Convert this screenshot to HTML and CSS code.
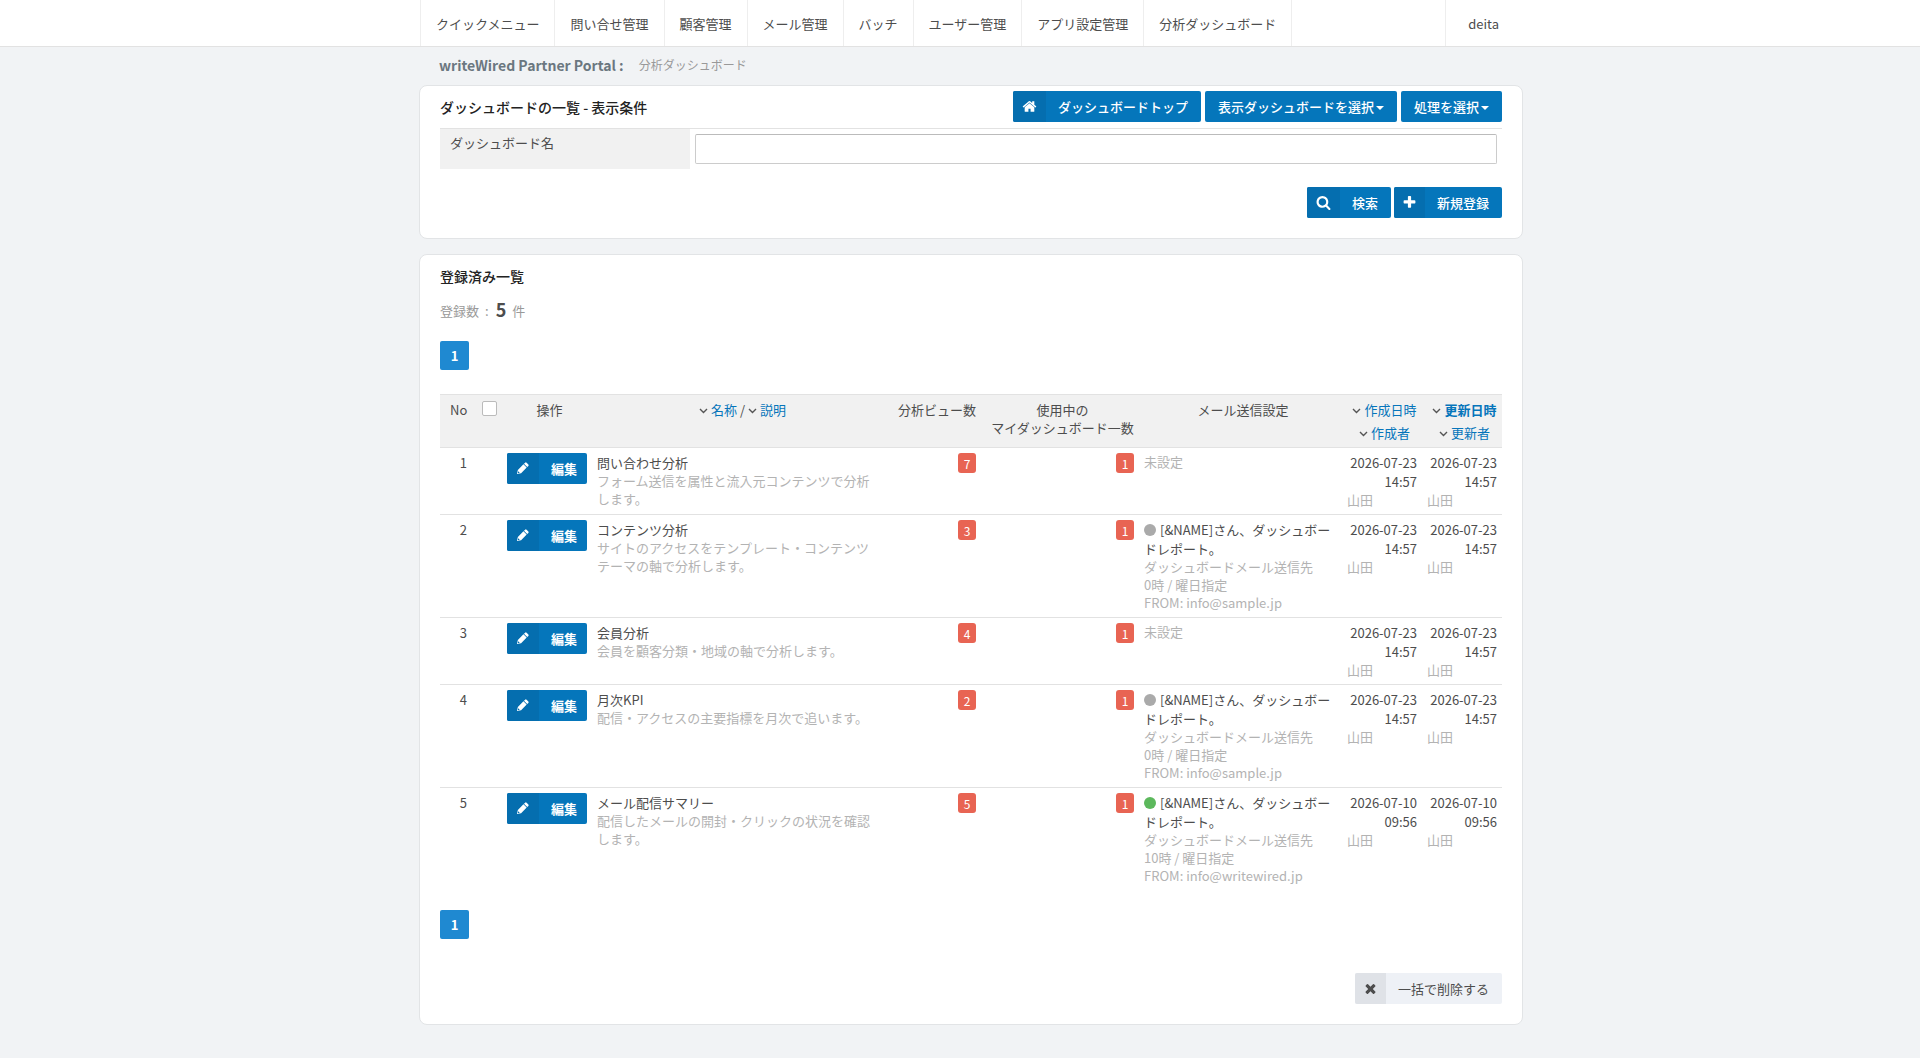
FILE: index.html
```html
<!DOCTYPE html>
<html lang="ja">
<head>
  <meta charset="UTF-8">
  <title>分析ダッシュボード</title>
  <link rel="stylesheet" href="styles.css">
</head>
<body>

<!-- icons -->
<svg class="sprite" aria-hidden="true">
  <symbol id="home" viewBox="0 0 1792 1792"><path d="M1472 992v480q0 26-19 45t-45 19h-384v-384h-256v384h-384q-26 0-45-19t-19-45v-480q0-1 .5-3t.5-3l575-474 575 474q1 2 1 6zm223-69l-62 74q-8 9-21 11h-3q-13 0-21-7l-692-577-692 577q-12 8-24 7-13-2-21-11l-62-74q-8-10-7-23.500t11-21.500l719-599q32-26 76-26t76 26l244 204v-195q0-14 9-23t23-9h192q14 0 23 9t9 23v408l219 182q10 8 11 21.500t-7 23.500z"/></symbol>
  <symbol id="search" viewBox="0 0 1792 1792"><path d="M1216 832q0-185-131.500-316.500t-316.500-131.500-316.500 131.500-131.500 316.500 131.500 316.500 316.500 131.500 316.500-131.500 131.500-316.500zm512 832q0 52-38 90t-90 38q-54 0-90-38l-343-342q-179 124-399 124-143 0-273.500-55.500t-225-150-150-225-55.500-273.500 55.500-273.500 150-225 225-150 273.500-55.500 273.500 55.500 225 150 150 225 55.500 273.500q0 220-124 399l343 343q37 37 37 90z"/></symbol>
  <symbol id="plus" viewBox="0 0 1792 1792"><path d="M1600 736v192q0 40-28 68t-68 28h-416v416q0 40-28 68t-68 28h-192q-40 0-68-28t-28-68v-416h-416q-40 0-68-28t-28-68v-192q0-40 28-68t68-28h416v-416q0-40 28-68t68-28h192q40 0 68 28t28 68v416h416q40 0 68 28t28 68z"/></symbol>
  <symbol id="pencil" viewBox="0 0 14 14"><path d="M1 13l1-4.500 6-6 3.500 3.500-6 6zM8.600 1.900l1.200-1.200q.8-.7 1.600 0l1.900 1.900q.7.8 0 1.600l-1.200 1.200z"/><path class="notch" d="M2.300 10l1.700 1.700-1.300.4-.8-.8z"/></symbol>
  <symbol id="times" viewBox="0 0 1792 1792"><path d="M1490 1322q0 40-28 68l-136 136q-28 28-68 28t-68-28l-294-294-294 294q-28 28-68 28t-68-28l-136-136q-28-28-28-68t28-68l294-294-294-294q-28-28-28-68t28-68l136-136q28-28 68-28t68 28l294 294 294-294q28-28 68-28t68 28l136 136q28 28 28 68t-28 68l-294 294 294 294q28 28 28 68z"/></symbol>
  <symbol id="angle" viewBox="0 0 9 6"><path d="M1 1l3.500 3.500L8 1" fill="none" stroke="#555" stroke-width="1.400"/></symbol>
</svg>

<header class="navbar">
  <nav class="container nav">
    <a href="#">クイックメニュー</a>
    <a href="#">問い合せ管理</a>
    <a href="#">顧客管理</a>
    <a href="#">メール管理</a>
    <a href="#">バッチ</a>
    <a href="#">ユーザー管理</a>
    <a href="#">アプリ設定管理</a>
    <a href="#">分析ダッシュボード</a>
    <a href="#" class="user">deita</a>
  </nav>
</header>

<main>
  <div class="container">
    <div class="crumb">
      <strong>writeWired Partner Portal :</strong>
      <span>分析ダッシュボード</span>
    </div>

    <section class="panel">
      <div class="panel-head">
        <h2>ダッシュボードの一覧 - 表示条件</h2>
        <div class="buttons">
          <button type="button" class="btn"><span class="ico"><svg><use href="#home"/></svg></span><span class="label">ダッシュボードトップ</span></button>
          <button type="button" class="btn drop">表示ダッシュボードを選択<i class="caret"></i></button>
          <button type="button" class="btn drop">処理を選択<i class="caret"></i></button>
        </div>
      </div>
      <div class="field">
        <label for="name">ダッシュボード名</label>
        <div class="field-input"><input type="text" id="name"></div>
      </div>
      <div class="buttons form-buttons">
        <button type="button" class="btn"><span class="ico"><svg><use href="#search"/></svg></span><span class="label">検索</span></button>
        <button type="button" class="btn"><span class="ico narrow"><svg><use href="#plus"/></svg></span><span class="label">新規登録</span></button>
      </div>
    </section>

    <section class="panel">
      <h2 class="list-title">登録済み一覧</h2>
      <p class="count">登録数<span>:</span><strong>5</strong>件</p>
      <div class="pager"><a href="#">1</a></div>

      <table class="list">
        <colgroup>
          <col class="c-no"><col class="c-check"><col class="c-edit"><col><col class="c-view"><col class="c-my"><col class="c-mail"><col class="c-date"><col class="c-date">
        </colgroup>
        <thead>
          <tr>
            <th class="right">No</th>
            <th class="right"><input type="checkbox" class="check" aria-label="全て選択"></th>
            <th>操作</th>
            <th><svg class="angle"><use href="#angle"/></svg><a href="#">名称</a> / <svg class="angle"><use href="#angle"/></svg><a href="#">説明</a></th>
            <th>分析ビュー数</th>
            <th>使用中の<br>マイダッシュボード一数</th>
            <th>メール送信設定</th>
            <th class="sort"><div><svg class="angle"><use href="#angle"/></svg><a href="#">作成日時</a></div><div><svg class="angle"><use href="#angle"/></svg><a href="#">作成者</a></div></th>
            <th class="sort"><div><svg class="angle"><use href="#angle"/></svg><a href="#" class="active">更新日時</a></div><div><svg class="angle"><use href="#angle"/></svg><a href="#">更新者</a></div></th>
          </tr>
        </thead>
        <tbody>
          <tr>
            <td class="right">1</td>
            <td></td>
            <td><button type="button" class="btn edit"><span class="ico"><svg><use href="#pencil"/></svg></span><span class="label">編集</span></button></td>
            <td class="name">問い合わせ分析<p>フォーム送信を属性と流入元コンテンツで分析します。</p></td>
            <td class="right"><span class="badge">7</span></td>
            <td class="right"><span class="badge">1</span></td>
            <td><p>未設定</p></td>
            <td class="date">2026-07-23 14:57<p>山田</p></td>
            <td class="date">2026-07-23 14:57<p>山田</p></td>
          </tr>
          <tr>
            <td class="right">2</td>
            <td></td>
            <td><button type="button" class="btn edit"><span class="ico"><svg><use href="#pencil"/></svg></span><span class="label">編集</span></button></td>
            <td class="name">コンテンツ分析<p>サイトのアクセスをテンプレート・コンテンツテーマの軸で分析します。</p></td>
            <td class="right"><span class="badge">3</span></td>
            <td class="right"><span class="badge">1</span></td>
            <td><i class="dot"></i>[&amp;NAME]さん、ダッシュボードレポート。<p>ダッシュボードメール送信先<br>0時 / 曜日指定<br>FROM: info@sample.jp</p></td>
            <td class="date">2026-07-23 14:57<p>山田</p></td>
            <td class="date">2026-07-23 14:57<p>山田</p></td>
          </tr>
          <tr>
            <td class="right">3</td>
            <td></td>
            <td><button type="button" class="btn edit"><span class="ico"><svg><use href="#pencil"/></svg></span><span class="label">編集</span></button></td>
            <td class="name">会員分析<p>会員を顧客分類・地域の軸で分析します。</p></td>
            <td class="right"><span class="badge">4</span></td>
            <td class="right"><span class="badge">1</span></td>
            <td><p>未設定</p></td>
            <td class="date">2026-07-23 14:57<p>山田</p></td>
            <td class="date">2026-07-23 14:57<p>山田</p></td>
          </tr>
          <tr>
            <td class="right">4</td>
            <td></td>
            <td><button type="button" class="btn edit"><span class="ico"><svg><use href="#pencil"/></svg></span><span class="label">編集</span></button></td>
            <td class="name">月次KPI<p>配信・アクセスの主要指標を月次で追います。</p></td>
            <td class="right"><span class="badge">2</span></td>
            <td class="right"><span class="badge">1</span></td>
            <td><i class="dot"></i>[&amp;NAME]さん、ダッシュボードレポート。<p>ダッシュボードメール送信先<br>0時 / 曜日指定<br>FROM: info@sample.jp</p></td>
            <td class="date">2026-07-23 14:57<p>山田</p></td>
            <td class="date">2026-07-23 14:57<p>山田</p></td>
          </tr>
          <tr>
            <td class="right">5</td>
            <td></td>
            <td><button type="button" class="btn edit"><span class="ico"><svg><use href="#pencil"/></svg></span><span class="label">編集</span></button></td>
            <td class="name">メール配信サマリー<p>配信したメールの開封・クリックの状況を確認します。</p></td>
            <td class="right"><span class="badge">5</span></td>
            <td class="right"><span class="badge">1</span></td>
            <td><i class="dot on"></i>[&amp;NAME]さん、ダッシュボードレポート。<p>ダッシュボードメール送信先<br>10時 / 曜日指定<br>FROM: info@writewired.jp</p></td>
            <td class="date">2026-07-10 09:56<p>山田</p></td>
            <td class="date">2026-07-10 09:56<p>山田</p></td>
          </tr>
        </tbody>
      </table>

      <div class="pager"><a href="#">1</a></div>
      <div class="buttons delete-row">
        <button type="button" class="btn gray"><span class="ico narrow"><svg><use href="#times"/></svg></span><span class="label">一括で削除する</span></button>
      </div>
    </section>
  </div>
</main>

</body>
</html>
```
FILE: styles.css
```css
* {
  box-sizing: border-box;
}
body {
  margin: 0;
  background: #f1f3f5;
  color: #4d4d4d;
  font-family: "Noto Sans CJK JP", "Noto Sans", sans-serif;
  font-size: 13px;
  line-height: 18px;
}
a {
  color: #0675bb;
  text-decoration: none;
}
h2, p {
  margin: 0;
}
button, input {
  font-family: inherit;
  font-size: 13px;
}
.sprite {
  display: none;
}
svg {
  fill: currentColor;
}
.navbar, main {
  padding-left: 22px;
}
.container {
  max-width: 1104px;
  margin: 0 auto;
}

/* navigation */
.navbar {
  background: #fff;
  border-bottom: 1px solid #e2e2e2;
}
.nav {
  display: flex;
  padding: 0 1px;
}
.nav a {
  padding: 15px 15px 13px;
  border-left: 1px solid #eee;
  color: #4d4d4d;
}
.nav a:nth-child(8) {
  border-right: 1px solid #eee;
}
.nav .user {
  margin-left: auto;
  padding-left: 22px;
  padding-right: 23px;
}

.crumb {
  display: flex;
  align-items: center;
  gap: 15px;
  height: 38px;
  padding: 0 20px 2px;
}
.crumb strong {
  color: #6b7780;
  font-size: 14px;
}
.crumb span {
  color: #999;
  font-size: 12px;
}

/* panels */
.panel {
  margin-bottom: 15px;
  padding: 5px 20px 20px;
  background: #fff;
  border: 1px solid #e2e4e6;
  border-radius: 8px;
}
.panel h2 {
  color: #222;
  font-size: 14px;
  font-weight: 500;
}
.panel-head {
  display: flex;
  justify-content: space-between;
  align-items: center;
  padding-bottom: 6px;
  border-bottom: 1px solid #e2e2e2;
}
.buttons {
  display: flex;
  gap: 4px;
}
.field {
  display: flex;
}
.field label {
  width: 250px;
  padding: 5px 10px;
  background: #f1f1f1;
}
.field-input {
  flex: 1;
  padding: 5px;
}
.field-input input {
  display: block;
  width: 100%;
  height: 30px;
  padding: 0 8px;
  border: 1px solid #ccc;
  border-top-color: #bbb;
  border-radius: 2px;
}
.form-buttons {
  justify-content: flex-end;
  gap: 3px;
  padding-top: 18px;
}

/* buttons */
.btn {
  display: flex;
  align-items: center;
  height: 31px;
  padding: 0;
  background: #0576bb;
  border: 0;
  border-radius: 2px;
  color: #fff;
  font-weight: 500;
  line-height: 31px;
  overflow: hidden;
}
.ico {
  display: flex;
  align-items: center;
  justify-content: center;
  width: 33px;
  height: 31px;
  background: #056eaf;
}
.ico.narrow {
  width: 31px;
}
.ico svg {
  width: 15px;
  height: 15px;
}
.notch {
  fill: #056eaf;
}
.label {
  padding: 0 13px 0 12px;
}
.drop {
  padding: 0 13px;
}
.caret {
  margin: 2px 0 0 2px;
  border-top: 4px solid;
  border-left: 4px solid transparent;
  border-right: 4px solid transparent;
}
.edit {
  font-weight: bold;
}
.edit .ico {
  width: 32px;
}
.edit .ico svg {
  width: 13px;
  height: 13px;
}
.edit .label {
  padding-right: 10px;
}
.gray {
  background: #eef1f6;
  color: #4d4d4d;
  font-weight: normal;
}
.gray .ico {
  background: #dfe2e7;
}

/* list */
.list-title {
  padding-top: 7px;
}
.count {
  padding: 11px 0 17px;
  color: #999;
  line-height: 26px;
}
.count span {
  margin-left: 6px;
}
.count strong {
  margin: 0 6px 0 7px;
  color: #4d4d4d;
  font-size: 18px;
  vertical-align: -1px;
}
.pager {
  display: flex;
}
.pager a {
  width: 29px;
  height: 29px;
  background: #1f89d1;
  border-radius: 2px;
  color: #fff;
  font-weight: bold;
  line-height: 30px;
  text-align: center;
}
.list {
  width: 100%;
  margin: 24px 0 20px;
  border-collapse: separate;
  border-spacing: 0;
  table-layout: fixed;
}
.c-no { width: 32px; }
.c-check { width: 30px; }
.c-edit { width: 90px; }
.c-view { width: 93px; }
.c-my { width: 158px; }
.c-mail { width: 203px; }
.c-date { width: 80px; }
.list th {
  padding: 6px 5px 5px 10px;
  background: #f1f1f1;
  border-top: 1px solid #e2e2e2;
  border-bottom: 1px solid #e2e2e2;
  font-weight: normal;
  vertical-align: top;
}
.list td {
  padding: 5px;
  border-bottom: 1px solid #e2e2e2;
  line-height: 19px;
  vertical-align: top;
}
.list tbody tr:last-child td {
  border-bottom: 0;
}
.list td p {
  color: #b3b3b3;
  line-height: 18px;
}
.list .right {
  text-align: right;
}
.list td.name {
  padding-right: 10px;
}
.list td.date {
  text-align: right;
}
.date p {
  text-align: left;
}
.sort {
  white-space: nowrap;
}
.sort div + div {
  margin-top: 5px;
}
.sort .active {
  font-weight: bold;
}
.angle {
  width: 9px;
  height: 6px;
  margin-right: 3px;
  vertical-align: 1px;
}
.check {
  appearance: none;
  display: block;
  width: 15px;
  height: 15px;
  margin: 0 0 0 auto;
  background: #fff;
  border: 1px solid #bbb;
  border-radius: 2px;
}
.badge {
  display: inline-block;
  width: 18px;
  height: 20px;
  background: #e86453;
  border-radius: 3px;
  color: #fff;
  font-size: 12px;
  line-height: 21px;
  text-align: center;
  vertical-align: top;
}
.dot {
  display: inline-block;
  width: 12px;
  height: 12px;
  margin-right: 4px;
  background: #aaa;
  border-radius: 50%;
  vertical-align: -1px;
}
.dot.on {
  background: #5cb85c;
}
.delete-row {
  justify-content: flex-end;
  padding-top: 34px;
}
```
